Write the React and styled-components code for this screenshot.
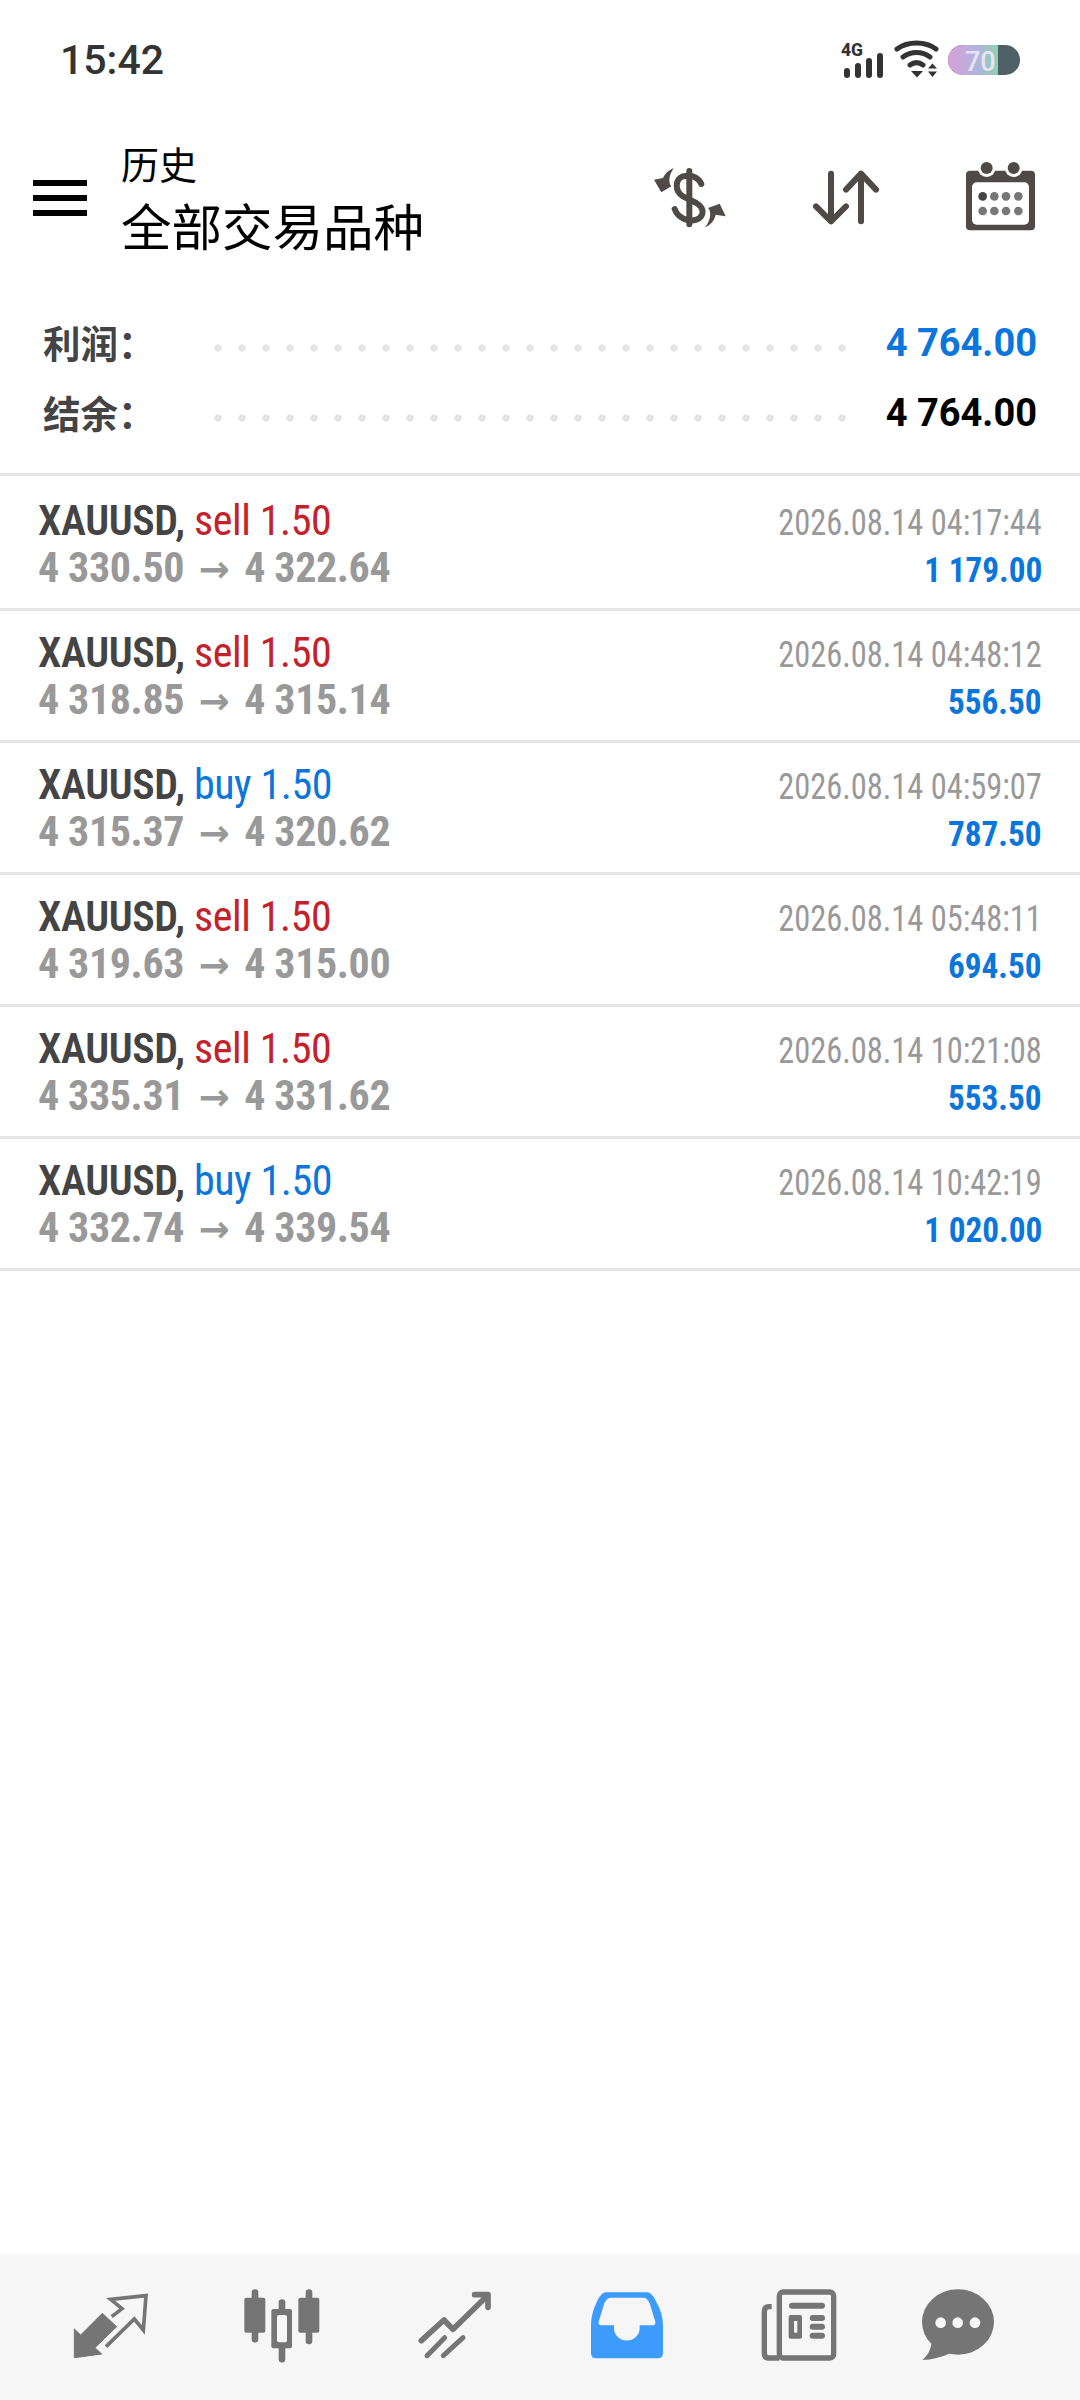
import React from "react";
import styled, { createGlobalStyle } from "styled-components";

const CJK = '"Noto Sans CJK SC", "Noto Sans", sans-serif';
const COND = 'Roboto, "Liberation Sans", sans-serif';

const Global = createGlobalStyle`
  html, body { margin: 0; padding: 0; background: #fff; }
  * { box-sizing: border-box; }
`;
const Page = styled.div`
  width: 1080px; height: 2400px; display: flex; flex-direction: column; background: #fff; overflow: hidden;
`;
const StatusBar = styled.div`
  height: 118px; padding: 38px 58px 0 60px; display: flex; justify-content: space-between; align-items: flex-start;
`;
const Clock = styled.div`
  font: 500 41px/44px Roboto, sans-serif; color: #333;
`;
const StatusIcons = styled.svg`
  width: 184px; height: 44px; margin-top: 2px; display: block;
`;
const Header = styled.div`
  height: 156px; padding: 0 44px 0 33px; display: flex; align-items: center;
`;
const Burger = styled.div`
  width: 54px; height: 36px; margin-top: 4px; flex: none;
  border-top: 6px solid #000; border-bottom: 6px solid #000; position: relative;
  &::after { content: ""; position: absolute; left: 0; right: 0; top: 9px; height: 6px; background: #000; }
`;
const Titles = styled.div`
  margin-left: 34px; flex: 1; align-self: flex-start; padding-top: 20px; font-family: ${CJK}; color: #000;
`;
const Sub = styled.div`font-size: 38px; line-height: 50px;`;
const Title = styled.div`font-size: 50.5px; line-height: 72px;`;
const HeadIcon = styled.svg`
  display: block; margin-left: ${p => p.$gap || 0}px;
`;
const Summary = styled.div`
  padding: 34px 43px 0 42px; height: 202px; border-bottom: 3px solid #e6e6e6;
`;
const SumRow = styled.div`
  height: 70px; display: flex; align-items: center;
`;
const SumLabel = styled.div`
  width: 163.7px; margin-top: -3px; padding-left: 1px; font: 700 37.5px/46px ${CJK}; color: #444;
`;
const Dots = styled.div`
  width: 648px; height: 10px; margin-top: 10px;
  background-image: radial-gradient(circle at center, #e4e4e4 3.4px, transparent 4px);
  background-size: 24px 10px;
`;
const SumValue = styled.div`
  flex: 1; text-align: right; font: 700 38px/46px ${COND}; color: ${p => p.$c}; white-space: nowrap;
`;
const List = styled.div`flex: 1; padding-top: 3px;`;
const Row = styled.div`
  height: 132px; padding: 18px 38px 0 38px; border-bottom: 3px solid #e6e6e6;
  display: flex; justify-content: space-between;
`;
const Col = styled.div`
  display: flex; flex-direction: column; align-items: flex-start;
`;
const RightCol = styled(Col)`
  align-items: flex-end; padding-top: 3px;
`;
const Line1 = styled.div`
  font: 600 42px/47px ${COND}; font-stretch: 75%; color: #444; white-space: nowrap;
  letter-spacing: -0.4px;
`;
const Side = styled.span`font-weight: 400; color: ${p => p.$c};`;
const Line2 = styled.div`
  font: 700 42px/47px ${COND}; font-stretch: 75%; color: #999; white-space: nowrap; letter-spacing: -0.4px;
`;
const Arrow = styled.span`
  font: 700 37px/47px "DejaVu Sans", sans-serif; margin: 0 5.5px;
`;
const Stamp = styled.div`
  font: 400 36px/47px ${COND}; font-stretch: 75%; color: #999; white-space: nowrap;
  transform: scaleX(0.9); transform-origin: right center;
`;
const Amount = styled.div`
  font: 700 35px/47px ${COND}; font-stretch: 75%; color: #0a76dc; white-space: nowrap;
  transform: scaleX(0.95); transform-origin: right center;
`;
const Nav = styled.div`
  height: 146px; background: #f6f6f6; padding: 26px 0 0 24px;
  display: grid; grid-template-columns: repeat(5, 172.3px) 145px; justify-items: center; align-items: start;
`;
const NavIcon = styled.svg`width: 90px; height: 90px; display: block;`;

const G = "#757575";
const BG = "#f6f6f6";
const D = "#4f4a48";

const trades = [
  ["sell", "4 330.50", "4 322.64", "2026.08.14 04:17:44", "1 179.00"],
  ["sell", "4 318.85", "4 315.14", "2026.08.14 04:48:12", "556.50"],
  ["buy", "4 315.37", "4 320.62", "2026.08.14 04:59:07", "787.50"],
  ["sell", "4 319.63", "4 315.00", "2026.08.14 05:48:11", "694.50"],
  ["sell", "4 335.31", "4 331.62", "2026.08.14 10:21:08", "553.50"],
  ["buy", "4 332.74", "4 339.54", "2026.08.14 10:42:19", "1 020.00"],
];

export default function App() {
  return (
    <Page>
      <Global />
      <StatusBar>
        <Clock>15:42</Clock>
        <StatusIcons viewBox="838 40 184 44">
          <defs>
            <linearGradient id="bat" x1="0" x2="1" y1="0" y2="0">
              <stop offset="0" stopColor="#d8a0d8" />
              <stop offset="0.55" stopColor="#b4b2e0" />
              <stop offset="1" stopColor="#8ed0ae" />
            </linearGradient>
          </defs>
          <text x="841" y="55.5" fontFamily="Roboto, sans-serif" fontWeight="800" fontSize="17.5" fill="#333">4G</text>
          <path d="M847 71v4M858 66v9M869 61v14M880 56v19" stroke="#333" strokeWidth="6" strokeLinecap="round" />
          <g fill="none" stroke="#333" strokeWidth="5" strokeLinecap="round">
            <path d="M897 49C908 41 925 41 936 49" />
            <path d="M903 57C911 51 922 51 930 57" />
            <path d="M910 65C914 62 919 62 923 65" />
          </g>
          <path d="M911 71h12l-6 6.5zM928 68.5l4.5-5 4.5 5zM928 71.5h9l-4.5 5.5z" fill="#333" />
          <rect x="948" y="45" width="72" height="30" rx="15" fill="#4f6167" />
          <path d="M963 45h35v30h-35a15 15 0 0 1 0-30z" fill="url(#bat)" />
          <text x="965" y="71" fontFamily="Roboto, sans-serif" fontWeight="500" fontSize="27" fill="#e6e4f4">70</text>
        </StatusIcons>
      </StatusBar>
      <Header>
        <Burger />
        <Titles>
          <Sub>历史</Sub>
          <Title>全部交易品种</Title>
        </Titles>
        <HeadIcon viewBox="160 484 222 210" width="74" height="70">
          <path d="M269 514V674" stroke={D} strokeWidth="18" strokeLinecap="round" fill="none" />
          <path d="M305 553C295 530 270 525 250 530C225 540 225 575 250 590L290 610C315 625 315 650 290 660C265 668 235 655 225 628" stroke={D} strokeWidth="18" strokeLinecap="round" fill="none" />
          <path d="M222 506C205 512 195 525 190 535L163 540L185 578L215 560C205 550 208 525 222 506Z" fill={D} />
          <path d="M316 683C335 675 345 660 348 645L378 650L360 612L325 625C335 632 335 660 316 683Z" fill={D} />
        </HeadIcon>
        <HeadIcon $gap={83} viewBox="630 484 215 210" width="71.7" height="70">
          <path d="M693 522V665M648 620L693 665L738 620M783 522V665M738 570L783 522L828 570" stroke={D} strokeWidth="18" strokeLinecap="round" strokeLinejoin="round" fill="none" />
        </HeadIcon>
        <HeadIcon $gap={83} viewBox="1095 484 213 210" width="71" height="70">
          <rect x="1098" y="513" width="207" height="179" rx="12" fill={D} />
          <rect x="1116" y="548" width="171" height="127" rx="14" fill="#fff" />
          <circle cx="1160" cy="505" r="27" fill="#fff" />
          <circle cx="1241" cy="505" r="27" fill="#fff" />
          <circle cx="1160" cy="505" r="18" fill={D} />
          <circle cx="1241" cy="505" r="18" fill={D} />
          <circle cx="1148" cy="590" r="13" fill="#444" />
          {[1183, 1218, 1255].map(x => <circle key={x} cx={x} cy="590" r="13" fill="#777" />)}
          {[1148, 1183, 1218, 1255].map(x => <circle key={x} cx={x} cy="634" r="13" fill="#777" />)}
        </HeadIcon>
      </Header>
      <Summary>
        <SumRow><SumLabel>利润：</SumLabel><Dots /><SumValue $c="#0a76dc">4 764.00</SumValue></SumRow>
        <SumRow><SumLabel>结余：</SumLabel><Dots /><SumValue $c="#000">4 764.00</SumValue></SumRow>
      </Summary>
      <List>
        {trades.map((t, i) => (
          <Row key={i}>
            <Col>
              <Line1>XAUUSD, <Side $c={t[0] === "sell" ? "#c4212b" : "#0a76dc"}>{t[0]} 1.50</Side></Line1>
              <Line2>{t[1]} <Arrow>→</Arrow> {t[2]}</Line2>
            </Col>
            <RightCol>
              <Stamp>{t[3]}</Stamp>
              <Amount>{t[4]}</Amount>
            </RightCol>
          </Row>
        ))}
      </List>
      <Nav>
        <NavIcon viewBox="75 90 270 270">
          <path d="M103 237L122 255L187 190L230 230L165 293L185 312L103 323Z" fill={G} stroke={G} strokeWidth="3" strokeLinejoin="round" />
          <path d="M198 290L283 207L310 240L318 137L212 148L246 176L215 200" fill="none" stroke={G} strokeWidth="11" />
        </NavIcon>
        <NavIcon viewBox="590 90 270 270">
          <path d="M644 128V268M806 128V273M725 158V328" stroke={G} strokeWidth="20" strokeLinecap="round" />
          <rect x="612" y="143" width="63" height="105" rx="6" fill={G} />
          <rect x="774" y="143" width="63" height="105" rx="6" fill={G} />
          <rect x="693" y="177" width="62" height="118" rx="6" fill={G} />
          <rect x="710" y="195" width="30" height="82" rx="6" fill={BG} />
        </NavIcon>
        <NavIcon viewBox="1106 90 270 270">
          <path d="M1140 272L1208 210L1235 238L1338 137M1300 134H1340V172" fill="none" stroke={G} strokeWidth="17" strokeLinecap="round" strokeLinejoin="round" />
          <path d="M1157 317L1210 263M1206 317L1265 263" fill="none" stroke={G} strokeWidth="15" strokeLinecap="round" />
        </NavIcon>
        <NavIcon viewBox="65 90 270 270">
          <path d="M135 127H262Q275 130 285 150Q308 190 308 225V310Q308 325 293 325H107Q92 325 92 310V225Q92 190 112 150Q122 130 135 127Z" fill="#3d9bfb" />
          <path d="M150 143H250Q262 145 268 160L285 215Q287 226 275 226H238V235A38 36 0 0 1 161 235V226H125Q113 226 115 215L132 160Q138 145 150 143Z" fill={BG} />
        </NavIcon>
        <NavIcon viewBox="585 90 270 270">
          <rect x="661" y="126" width="163" height="198" rx="12" fill="none" stroke={G} strokeWidth="16" />
          <path d="M638 170H630Q616 170 616 185V310Q616 324 630 324H661" fill="none" stroke={G} strokeWidth="16" />
          <path d="M699 167H789M761 204H789M761 230H789M761 257H789" stroke={G} strokeWidth="18" strokeLinecap="round" />
          <rect x="689" y="195" width="40" height="71" rx="6" fill={G} />
          <rect x="705" y="213" width="10" height="35" fill={BG} />
        </NavIcon>
        <NavIcon viewBox="1059 90 270 270">
          <ellipse cx="1194" cy="216" rx="108" ry="98" fill={G} />
          <path d="M1115 270C1115 300 1100 320 1087 330C1115 330 1145 322 1170 310Z" fill={G} />
          {[1142, 1193, 1245].map(x => <circle key={x} cx={x} cy="218" r="16" fill={BG} />)}
        </NavIcon>
      </Nav>
    </Page>
  );
}
